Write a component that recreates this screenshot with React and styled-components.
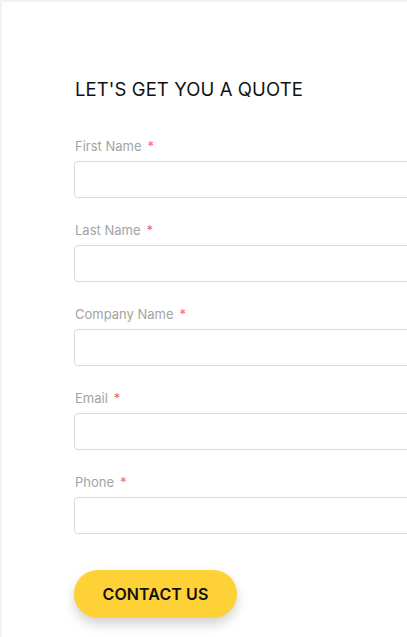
import styled, { createGlobalStyle } from 'styled-components';

const GlobalStyle = createGlobalStyle`
  html, body {
    margin: 0;
    padding: 0;
    background: #f2f2f2;
    overflow: hidden;
  }
  body {
    font-family: "Inter", "Noto Sans", sans-serif;
  }
`;

const Card = styled.div`
  margin: 2px 0 0 2px;
  width: 600px;
  min-height: 700px;
  background: #fff;
  padding: 74px 0 0 72px;
  box-sizing: border-box;
`;

const Title = styled.h2`
  margin: 0 0 35px 1px;
  font-size: 18.5px;
  font-weight: 400;
  line-height: 26px;
  color: #111;
  letter-spacing: 0.1px;
`;

const Form = styled.form`
  width: 440px;
  display: flex;
  flex-direction: column;
  gap: 23px;
`;

const Field = styled.div`
  display: flex;
  flex-direction: column;
`;

const Label = styled.label`
  font-size: 13px;
  line-height: 18px;
  color: #a3a3a3;
  margin: 0 0 6px 1px;
`;

const Star = styled.span`
  color: #f0637a;
  margin-left: 6px;
`;

const Input = styled.input`
  height: 37px;
  box-sizing: border-box;
  border: 1px solid #d9d9d9;
  border-radius: 4px;
  padding: 0 12px;
  font-size: 14px;
  outline: none;
`;

const Submit = styled.button`
  align-self: flex-start;
  margin-top: 13px;
  width: 163px;
  height: 48px;
  border: none;
  border-radius: 24px;
  background: #fed136;
  color: #111;
  font-family: inherit;
  font-size: 16px;
  font-weight: 600;
  letter-spacing: 0.1px;
  box-shadow: 0 6px 12px rgba(0, 0, 0, 0.18);
  cursor: pointer;
`;

const fields = ['First Name', 'Last Name', 'Company Name', 'Email', 'Phone'];

const App = () => (
  <>
    <GlobalStyle />
    <Card>
      <Title>LET'S GET YOU A QUOTE</Title>
      <Form onSubmit={e => e.preventDefault()}>
        {fields.map(f => (
          <Field key={f}>
            <Label>
              {f}
              <Star>*</Star>
            </Label>
            <Input />
          </Field>
        ))}
        <Submit type="submit">CONTACT US</Submit>
      </Form>
    </Card>
  </>
);

export default App;
